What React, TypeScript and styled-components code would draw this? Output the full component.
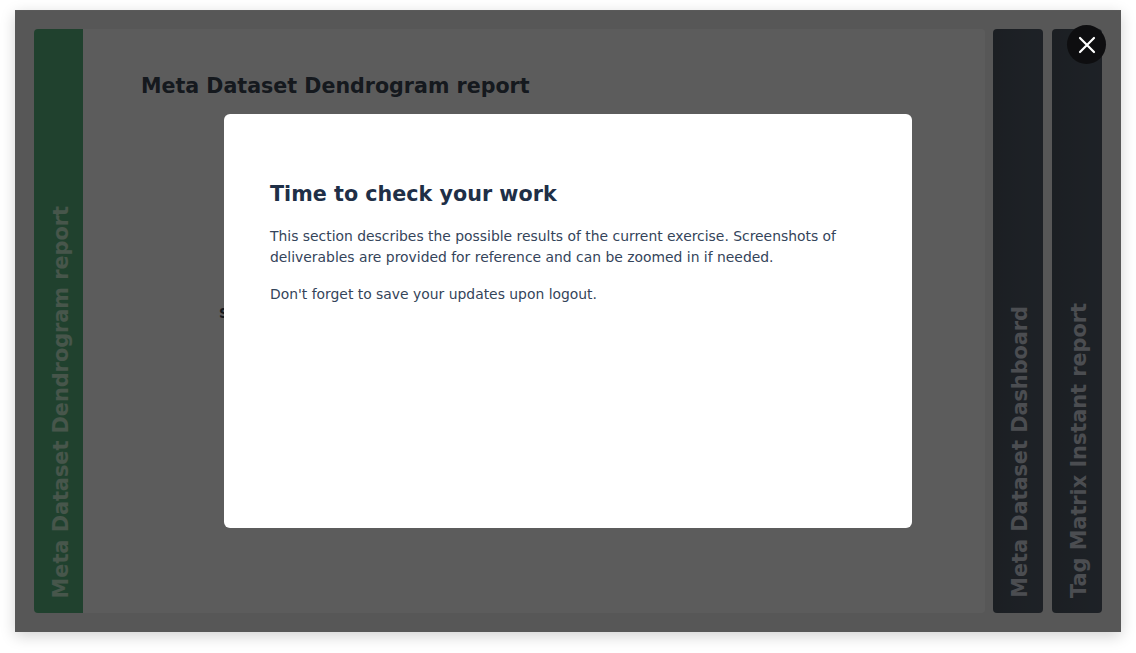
import React from "react";
import styled, { createGlobalStyle } from "styled-components";

const Global = createGlobalStyle`
  html, body { margin: 0; padding: 0; background: #ffffff; }
  body { font-family: "DejaVu Sans", Verdana, sans-serif; }
  * { box-sizing: border-box; }
`;

const Page = styled.div`
  width: 1136px;
  height: 653px;
  padding: 10px 15px 21px 15px;
`;

const Card = styled.div`
  position: relative;
  height: 622px;
  background: #f0f0f0;
  border-top: 1px solid #fafafa;
  display: flex;
  padding: 18px 19px 19px 19px;
  box-shadow: 0 4px 14px rgba(0, 0, 0, 0.18);
`;

const Tab = styled.div<{ $variant: "green" | "dark" }>`
  width: ${(p) => (p.$variant === "green" ? "49px" : "50px")};
  flex: none;
  border-radius: ${(p) => (p.$variant === "green" ? "4px 0 0 4px" : "4px")};
  background: ${(p) =>
    p.$variant === "green"
      ? "#5ab580"
      : "linear-gradient(90deg, #4d5762, #535d6b)"};
  margin-left: ${(p) => (p.$variant === "green" ? "0" : "8px")};
  display: flex;
  align-items: flex-end;
  justify-content: center;
  padding-bottom: 15px;
  & + & { margin-left: 9px; }
`;

const TabLabel = styled.span<{ $variant: "green" | "dark" }>`
  writing-mode: vertical-rl;
  transform: rotate(180deg);
  font-family: "DejaVu Sans", Verdana, sans-serif;
  font-weight: 700;
  font-size: 20.8px;
  white-space: nowrap;
  color: ${(p) => (p.$variant === "green" ? "#c4edd1" : "#d0d6df")};
  margin-left: 4px;
`;

const Panel = styled.div`
  flex: 1;
  background: #ffffff;
  border-radius: 0 4px 4px 0;
  padding: 45px 58px;
`;

const PanelTitle = styled.h2`
  margin: 0;
  font-size: 20.6px;
  font-weight: 700;
  color: #3b4553;
`;

const PanelText = styled.p`
  margin: 207px 0 0 78px;
  font-size: 14px;
  font-weight: 700;
  color: #3b4553;
`;

const Overlay = styled.div`
  position: absolute;
  inset: -1px 0 0 0;
  background: rgba(0, 0, 0, 0.64);
  display: flex;
  align-items: center;
  justify-content: center;
`;

const Modal = styled.div`
  width: 688px;
  height: 414px;
  background: #ffffff;
  border-radius: 6px;
  padding: 68px 46px;
`;

const ModalTitle = styled.h1`
  margin: 0 0 20px 0;
  font-size: 20.7px;
  font-weight: 700;
  color: #1f2f47;
`;

const ModalText = styled.p`
  margin: 0 0 16px 0;
  font-size: 13.9px;
  line-height: 21px;
  color: #34445a;
`;

const CloseButton = styled.button`
  position: absolute;
  top: 14px;
  right: 15px;
  width: 39px;
  height: 39px;
  border-radius: 50%;
  border: none;
  background: #0e0e10;
  display: flex;
  align-items: center;
  justify-content: center;
  padding: 0;
  cursor: pointer;
`;

export default function App() {
  return (
    <>
      <Global />
      <Page>
        <Card>
          <Tab $variant="green">
            <TabLabel $variant="green">Meta Dataset Dendrogram report</TabLabel>
          </Tab>
          <Panel>
            <PanelTitle>Meta Dataset Dendrogram report</PanelTitle>
            <PanelText>Screenshots</PanelText>
          </Panel>
          <Tab $variant="dark">
            <TabLabel $variant="dark">Meta Dataset Dashboard</TabLabel>
          </Tab>
          <Tab $variant="dark">
            <TabLabel $variant="dark">Tag Matrix Instant report</TabLabel>
          </Tab>
          <Overlay>
            <Modal>
              <ModalTitle>Time to check your work</ModalTitle>
              <ModalText>
                This section describes the possible results of the current exercise. Screenshots of
                deliverables are provided for reference and can be zoomed in if needed.
              </ModalText>
              <ModalText>Don't forget to save your updates upon logout.</ModalText>
            </Modal>
          </Overlay>
          <CloseButton aria-label="Close">
            <svg width="18" height="18" viewBox="0 0 18 18">
              <path d="M2 2 L16 16 M16 2 L2 16" stroke="#ffffff" strokeWidth="2.2" strokeLinecap="round" />
            </svg>
          </CloseButton>
        </Card>
      </Page>
    </>
  );
}
